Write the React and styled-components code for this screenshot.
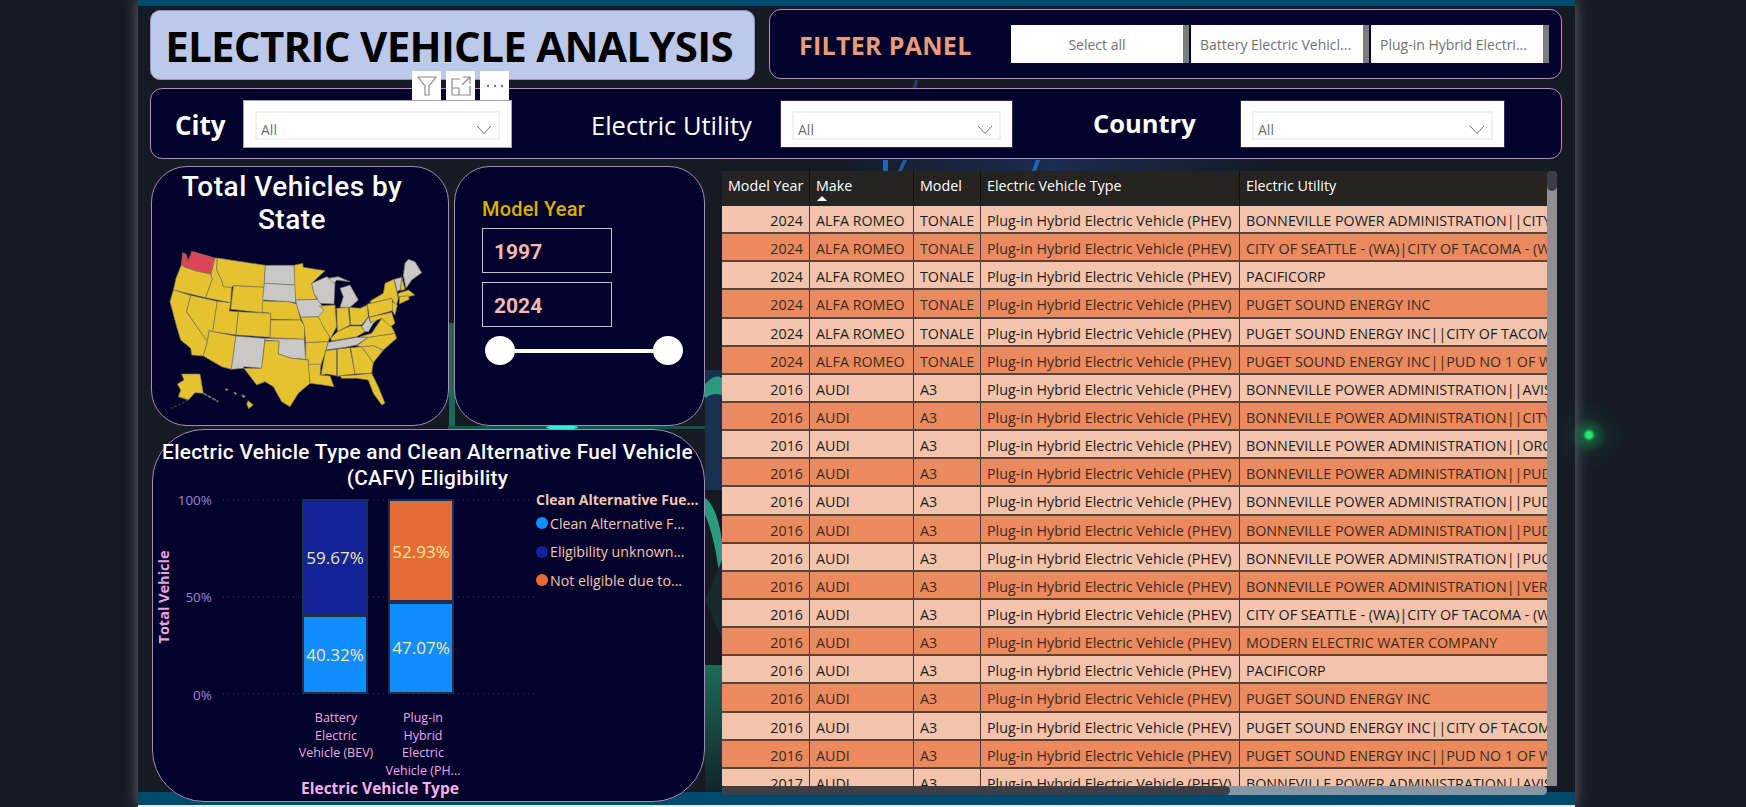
import React from 'react'
import styled, { createGlobalStyle } from 'styled-components'

const Global = createGlobalStyle`
  html, body { margin: 0; padding: 0; background: #161a24; overflow: hidden; }
  * { box-sizing: border-box; }
`

const Page = styled.div`
  position: relative;
  width: 1746px;
  height: 807px;
  padding-left: 138px;
  background: #161a24;
  font-family: "Open Sans", sans-serif;
  overflow: hidden;
`

const Dot = styled.div`
  position: absolute;
  left: 1549px;
  top: 395px;
  width: 80px;
  height: 80px;
  background: radial-gradient(circle, #20e870 0, #20e870 3px, rgba(20, 170, 90, 0.45) 6px, rgba(20, 120, 80, 0.1) 18px, transparent 38px);
`

const Canvas = styled.div`
  position: relative;
  width: 1437px;
  height: 807px;
  display: flex;
  flex-direction: column;
  background: #161a24;
  box-shadow: 0 0 14px rgba(190, 190, 200, 0.5);
`

const Decor = styled.svg`
  position: absolute;
  left: 0;
  top: 0;
`

const TopStrip = styled.div`
  height: 6px;
  flex: none;
  background: #004a6e;
  position: relative;
`

const BottomStrip = styled.div`
  height: 13px;
  flex: none;
  background: #004a6e;
`

const WhiteStrip = styled.div`
  height: 2px;
  flex: none;
  background: #e9ecef;
`

const Body = styled.div`
  position: relative;
  z-index: 1;
  flex: 1;
  min-height: 0;
  padding: 3px 0 0 12px;
  display: flex;
  flex-direction: column;
  & > * { flex: none; }
`

const TopRow = styled.div`
  display: flex;
  align-items: flex-start;
  gap: 14px;
`

const TitleBox = styled.div`
  width: 605px;
  height: 70px;
  margin-top: 1px;
  padding-right: 7px;
  background: #bdc9ea;
  border: 1px solid #a58fb5;
  border-radius: 10px;
  display: flex;
  align-items: center;
  justify-content: center;
`

const Title = styled.h1`
  margin: 0;
  font-family: "Open Sans", sans-serif;
  font-size: 42px;
  font-weight: 700;
  letter-spacing: -0.7px;
  color: #000;
  white-space: nowrap;
`

const Panel = styled.div`
  background: #02022c;
  border: 1px solid #b58fc0;
  border-radius: 12px;
`

const FilterPanel = styled(Panel)`
  width: 793px;
  height: 70px;
  display: flex;
  align-items: center;
  padding-left: 29px;
`

const FilterTitle = styled.div`
  width: 212px;
  font-family: "Open Sans", sans-serif;
  font-size: 25px;
  font-weight: 700;
  color: #ea9c78;
  white-space: nowrap;
  letter-spacing: 0.3px;
  padding-top: 2px;
`

const Chips = styled.div`
  display: flex;
  gap: 2px;
`

const Chip = styled.div`
  width: ${(p) => p.$width}px;
  height: 38px;
  background: #fff;
  border-right: 6px solid #7d7d7d;
  color: #727272;
  font-size: 14px;
  display: flex;
  align-items: center;
  justify-content: ${(p) => (p.$center ? 'center' : 'flex-start')};
  padding-left: ${(p) => (p.$center ? 0 : 9)}px;
  white-space: nowrap;
`

const SlicerRow = styled(Panel)`
  width: 1412px;
  height: 71px;
  margin-top: 8px;
  display: flex;
  align-items: center;
`

const SlicerLabel = styled.div`
  width: ${(p) => p.$width}px;
  padding-left: ${(p) => p.$pad}px;
  color: #fff;
  font-size: ${(p) => p.$size}px;
  font-weight: ${(p) => p.$weight};
  white-space: nowrap;
  flex: none;
  margin-top: ${(p) => p.$top}px;
`

const Slicer = styled.div`
  width: ${(p) => p.$width}px;
  height: 48px;
  flex: none;
  background: #fff;
  border: 1px solid ${(p) => (p.$active ? '#a6a6a6' : '#2e2e52')};
  padding: 10px 11px 7px 11px;
  margin-top: 1px;
`

const SlicerBox = styled.div`
  height: 100%;
  border: 2px solid #f1f1f1;
  display: flex;
  align-items: center;
  justify-content: space-between;
  padding: 8px 6px 0 4px;
  color: #6f6f6f;
  font-size: 14px;
`

const Main = styled.div`
  display: flex;
  margin-top: 7px;
  padding-left: 1px;
`

const LeftColumn = styled.div`
  width: 554px;
  flex: none;
  display: flex;
  flex-direction: column;
  gap: 3px;
`

const CardRow = styled.div`
  display: flex;
  gap: 5px;
`

const Card = styled.div`
  height: 260px;
  background: #02022c;
  border: 1px solid #a98bb0;
  border-radius: 36px;
`

const MapCard = styled(Card)`
  width: 298px;
  padding: 3px 0 0 8px;
`

const MapTitle = styled.div`
  width: 264px;
  margin: 0 0 -6px 0;
  font-family: Roboto, sans-serif;
  font-size: 28px;
  font-weight: 500;
  letter-spacing: 0.5px;
  line-height: 33px;
  text-align: center;
  color: #fff;
`

const YearCard = styled(Card)`
  width: 251px;
  padding: 30px 0 0 29px;
  display: flex;
  flex-direction: column;
`

const YearLabel = styled.div`
  margin-left: -2px;
  font-family: Roboto, sans-serif;
  font-size: 20px;
  font-weight: 500;
  line-height: 24px;
  letter-spacing: 0.2px;
  color: #dcb000;
`

const YearBox = styled.div`
  width: 130px;
  height: 45px;
  margin: ${(p) => p.$top}px 0 0 -2px;
  border: 1px solid #c4c4c4;
  padding: 3px 0 0 11px;
  display: flex;
  align-items: center;
  font-family: Roboto, sans-serif;
  font-size: 21px;
  font-weight: 700;
  color: #f5b8b0;
`

const RangeSlider = styled.div`
  width: 198px;
  margin: 9px 0 0 1px;
  display: flex;
  align-items: center;
`

const Handle = styled.div`
  width: 30px;
  height: 29px;
  flex: none;
  border-radius: 50%;
  background: #fff;
`

const Track = styled.div`
  flex: 1;
  height: 4px;
  background: #fff;
`

const ChartCard = styled(Panel)`
  width: 553px;
  height: 373px;
  margin-left: 1px;
  border-color: #a98bb0;
  border-radius: 52px;
  padding: 9px 2px 0 0;
`

const ChartTitle = styled.div`
  font-family: Roboto, sans-serif;
  font-size: 20.8px;
  font-weight: 500;
  letter-spacing: 0.3px;
  line-height: 26px;
  text-align: center;
  color: #fff;
  white-space: nowrap;
`

const ChartBody = styled.div`
  display: flex;
`

const Legend = styled.div`
  flex: 1;
  color: #f4c8b0;
`

const LegendTitle = styled.div`
  font-size: 14px;
  font-weight: 700;
  line-height: 18px;
  white-space: nowrap;
`

const LegendItem = styled.div`
  height: 28.5px;
  display: flex;
  align-items: center;
  gap: 2px;
  font-size: 14.2px;
  white-space: nowrap;
  &:first-of-type { margin-top: 1px; }
`

const LegendDot = styled.span`
  width: 12px;
  height: 12px;
  border-radius: 50%;
  background: ${(p) => p.$color};
`

const TableWrap = styled.div`
  width: 835px;
  margin: 5px 0 0 17px;
  flex: none;
`

const TableFrame = styled.div`
  display: flex;
  height: 615px;
`

const Table = styled.div`
  width: 825px;
  overflow: hidden;
  font-size: 14.3px;
`

const Columns = styled.div`
  display: grid;
  grid-template-columns: 87px 104px 67px 259px 308px;
`

const HeadRow = styled(Columns)`
  height: 35px;
  background: #252423;
  color: #fff;
`

const HeadCell = styled.div`
  position: relative;
  padding: 5px 6px 0;
  border-left: ${(p) => (p.$first ? 'none' : '1px solid #111')};
  white-space: nowrap;
`

const SortMark = styled.span`
  position: absolute;
  left: 7px;
  top: 25px;
  width: 0;
  height: 0;
  border-left: 5px solid transparent;
  border-right: 5px solid transparent;
  border-bottom: 5px solid #fff;
`

const Row = styled(Columns)`
  height: 28.15px;
  background: ${(p) => (p.$odd ? '#f4c3ac' : '#ea8a5e')};
  color: ${(p) => (p.$odd ? '#1c1c1c' : '#3a2a22')};
  border-bottom: 2px solid #5a4238;
`

const Cell = styled.div`
  padding: 2px 6px 0;
  line-height: 26px;
  white-space: nowrap;
  overflow: hidden;
  border-left: ${(p) => (p.$first ? 'none' : '1px solid #4a3a34')};
  text-align: ${(p) => (p.$right ? 'right' : 'left')};
`

const VBar = styled.div`
  width: 10px;
  background: #8f8f94;
  border-radius: 5px 5px 0 0;
`

const VThumb = styled.div`
  height: 20px;
  background: #3b3e47;
  border-radius: 5px;
`

const HBar = styled.div`
  width: 825px;
  height: 9px;
  background: #8696a4;
  border-radius: 5px;
`

const HThumb = styled.div`
  width: 508px;
  height: 100%;
  background: #3b3f48;
  border-radius: 5px;
`

const VisualTools = styled.div`
  position: absolute;
  z-index: 2;
  left: 274px;
  top: 65px;
  display: flex;
  gap: 5px;
`

const ToolButton = styled.div`
  width: 29px;
  height: 29px;
  background: #fff;
  display: flex;
  align-items: center;
  justify-content: center;
`

const Chevron = () => (
  <svg width="16" height="10" viewBox="0 0 16 10">
    <polyline points="1,1 8,8.5 15,1" fill="none" stroke="#707070" strokeWidth="1" />
  </svg>
)

const YELLOW = '#e5c22f'
const GREY = '#c9c8c6'
const RED = '#dc4654'

// traced by hand over the map visual, in its own 840x570 coordinates
const states = [
  [RED, '68,68 78,72 84,92 93,72 95,64 165,84 153,133 105,122 75,112 64,105'],
  [YELLOW, '64,105 75,112 105,122 153,133 157,148 137,203 40,180 48,145'],
  [YELLOW, '40,180 92,196 80,245 142,335 130,378 95,375 92,355 62,330 50,290 30,215'],
  [YELLOW, '92,196 172,214 158,305 147,302 142,335 80,245'],
  [YELLOW, '165,84 172,84 170,120 185,150 190,170 215,172 212,218 137,203 157,148 153,133'],
  [YELLOW, '172,84 316,106 312,172 220,167 215,172 190,170 185,150 170,120'],
  [YELLOW, '220,167 312,172 308,248 212,238'],
  [YELLOW, '172,214 212,218 208,243 235,245 228,315 158,305'],
  [YELLOW, '235,245 332,250 330,322 228,315'],
  [YELLOW, '158,305 228,318 214,418 185,410 130,378 142,335 147,302'],
  [GREY, '228,318 315,325 305,415 252,410 250,415 214,418'],
  [GREY, '316,106 402,106 407,165 313,160'],
  [GREY, '313,160 407,165 407,218 385,215 308,210'],
  [YELLOW, '308,213 385,215 410,222 422,270 332,268 332,250 306,246'],
  [YELLOW, '332,270 422,270 434,290 433,328 330,323'],
  [GREY, '315,325 433,328 437,388 395,385 355,372 357,333 315,331'],
  [YELLOW, '315,333 357,333 355,372 395,385 445,390 450,460 415,490 390,530 365,515 340,470 315,455 290,465 252,415 305,415'],
  [YELLOW, '402,106 428,100 430,112 495,122 455,160 462,190 470,208 407,210'],
  [GREY, '407,210 475,208 492,240 480,260 422,262 410,225'],
  [YELLOW, '422,262 480,260 490,290 510,320 505,335 437,338 433,290'],
  [YELLOW, '437,338 505,335 495,370 483,405 445,405 445,390 437,388'],
  [YELLOW, '445,403 483,403 480,435 510,438 522,470 490,465 450,460'],
  [GREY, '455,160 500,140 525,155 522,222 480,220 462,190'],
  [YELLOW, '478,228 525,225 530,290 512,325 490,290 475,260 492,240'],
  [GREY, '505,145 535,140 570,155 530,150 522,160'],
  [GREY, '540,175 570,165 595,210 570,232 540,232 550,200'],
  [YELLOW, '530,235 565,232 570,285 532,305'],
  [YELLOW, '568,232 600,235 622,225 625,260 605,285 572,285'],
  [YELLOW, '512,325 532,305 570,288 603,288 615,305 590,320 515,333'],
  [GREY, '505,337 590,322 625,322 590,345 555,352 498,360'],
  [YELLOW, '497,362 530,358 530,437 500,432 483,435'],
  [YELLOW, '532,357 570,353 585,432 540,437 532,440'],
  [YELLOW, '572,353 605,350 640,398 635,430 585,432'],
  [YELLOW, '540,437 585,435 635,430 655,470 675,520 665,525 640,490 625,450 590,445 545,445'],
  [YELLOW, '605,350 640,347 670,360 640,398'],
  [YELLOW, '590,347 625,322 705,310 710,325 670,360 640,347 605,350'],
  [YELLOW, '600,320 635,310 665,265 695,290 705,310 625,322'],
  [GREY, '605,290 625,262 632,278 665,258 640,280 625,305 615,305'],
  [YELLOW, '622,222 695,205 705,240 628,262'],
  [YELLOW, '632,212 670,190 675,160 702,148 715,205 708,230 695,205 630,220'],
  [YELLOW, '628,262 695,247 705,280 692,290 665,265 632,278'],
  [YELLOW, '697,215 712,225 705,255 698,245'],
  [GREY, '703,148 725,142 722,178 712,185'],
  [YELLOW, '725,140 735,178 722,182'],
  [GREY, '735,100 745,88 765,95 785,128 755,150 738,175 730,135'],
  [YELLOW, '715,190 745,180 765,195 745,200 715,200'],
  [YELLOW, '718,200 745,197 748,208 718,222'],
  [YELLOW, '65,432 120,432 130,490 105,488 85,510 55,500 62,480 52,462 72,450'],
  [YELLOW, '222,486 230,490 226,494'],
  [YELLOW, '245,494 256,498 250,503'],
  [YELLOW, '196,476 204,478 200,483'],
  [YELLOW, '264,512 280,525 266,536 260,522'],
]

const USMap = () => (
  <svg width="280" height="190" viewBox="0 0 840 570">
    {states.map(([fill, points], i) => (
      <polygon key={i} points={points} fill={fill} stroke="#7a7560" strokeWidth="2" strokeLinejoin="round" />
    ))}
    <polyline points="130,490 175,515" fill="none" stroke="#6e6a50" strokeWidth="6" strokeDasharray="12 3" />
    <polyline points="85,510 35,535" fill="none" stroke="#6e6a50" strokeWidth="2.5" strokeDasharray="8 5" />
  </svg>
)

const BarChart = () => (
  <svg width="383" height="308" viewBox="153 491 383 308" style={{ display: 'block', overflow: 'visible' }}>
    {[500, 597, 694].map((y) => (
      <line key={y} x1="223" x2="534" y1={y} y2={y} stroke="#3a3a52" strokeWidth="1" strokeDasharray="1 4" />
    ))}
    <g fontFamily="Open Sans, sans-serif" fontSize="13.5" fill="#9c86d8" textAnchor="end">
      <text x="212" y="505">100%</text>
      <text x="212" y="602">50%</text>
      <text x="212" y="700">0%</text>
    </g>
    <text transform="translate(169 597) rotate(-90)" fontFamily="Open Sans, sans-serif" fontSize="14.5" fontWeight="700" fill="#e9a4e0" textAnchor="middle">Total Vehicle</text>

    <g stroke="#1c2c52" strokeWidth="2">
      <rect x="303" y="500" width="64" height="114" fill="#13249a" />
      <rect x="303" y="616" width="64" height="77" fill="#118dff" />
      <rect x="389" y="500" width="64" height="101" fill="#e66c37" />
      <rect x="389" y="603" width="64" height="90" fill="#118dff" />
    </g>
    <g fontFamily="Open Sans, sans-serif" fontSize="17" fill="#f2e69a" textAnchor="middle">
      <text x="335" y="564">59.67%</text>
      <text x="335" y="661">40.32%</text>
      <text x="421" y="558">52.93%</text>
      <text x="421" y="654">47.07%</text>
    </g>
    <g fontFamily="Open Sans, sans-serif" fontSize="12.5" fill="#eeaae4" textAnchor="middle">
      <text x="336" y="722">Battery</text>
      <text x="336" y="740">Electric</text>
      <text x="336" y="757">Vehicle (BEV)</text>
      <text x="423" y="722">Plug-in</text>
      <text x="423" y="740">Hybrid</text>
      <text x="423" y="757">Electric</text>
      <text x="423" y="775">Vehicle (PH...</text>
    </g>
    <text x="380" y="794" fontFamily="Open Sans, sans-serif" fontSize="15.5" fontWeight="700" fill="#f3b2ea" textAnchor="middle">Electric Vehicle Type</text>
  </svg>
)

const BON = 'BONNEVILLE POWER ADMINISTRATION||'
const SEA = 'CITY OF SEATTLE - (WA)|CITY OF TACOMA - (WA)'
const PSE = 'PUGET SOUND ENERGY INC'

const utilities = [
  [2024, 'ALFA ROMEO', 'TONALE', BON + 'CITY OF TACOMA - (WA)'],
  [2024, 'ALFA ROMEO', 'TONALE', SEA],
  [2024, 'ALFA ROMEO', 'TONALE', 'PACIFICORP'],
  [2024, 'ALFA ROMEO', 'TONALE', PSE],
  [2024, 'ALFA ROMEO', 'TONALE', PSE + '||CITY OF TACOMA - (WA)'],
  [2024, 'ALFA ROMEO', 'TONALE', PSE + '||PUD NO 1 OF WHATCOM COUNTY'],
  [2016, 'AUDI', 'A3', BON + 'AVISTA CORP'],
  [2016, 'AUDI', 'A3', BON + 'CITY OF TACOMA - (WA)'],
  [2016, 'AUDI', 'A3', BON + 'ORCAS POWER & LIGHT COOP'],
  [2016, 'AUDI', 'A3', BON + 'PUD NO 1 OF ASOTIN COUNTY'],
  [2016, 'AUDI', 'A3', BON + 'PUD NO 1 OF BENTON COUNTY'],
  [2016, 'AUDI', 'A3', BON + 'PUD NO 1 OF CLARK COUNTY'],
  [2016, 'AUDI', 'A3', BON + 'PUGET SOUND ENERGY INC'],
  [2016, 'AUDI', 'A3', BON + 'VERA WATER & POWER'],
  [2016, 'AUDI', 'A3', SEA],
  [2016, 'AUDI', 'A3', 'MODERN ELECTRIC WATER COMPANY'],
  [2016, 'AUDI', 'A3', 'PACIFICORP'],
  [2016, 'AUDI', 'A3', PSE],
  [2016, 'AUDI', 'A3', PSE + '||CITY OF TACOMA - (WA)'],
  [2016, 'AUDI', 'A3', PSE + '||PUD NO 1 OF WHATCOM COUNTY'],
  [2017, 'AUDI', 'A3', BON + 'AVISTA CORP'],
]

const App = () => (
  <Page>
    <Global />
    <Canvas>
      <Decor width="1437" height="807" viewBox="138 0 1437 807">
        <defs>
          <linearGradient id="floor" x1="0" y1="0" x2="0" y2="1">
            <stop offset="0" stopColor="#1f6a58" />
            <stop offset="1" stopColor="#10242c" />
          </linearGradient>
          <linearGradient id="sky" x1="0" y1="0" x2="1" y2="0">
            <stop offset="0" stopColor="#161a24" />
            <stop offset="0.5" stopColor="#1a2c50" />
            <stop offset="1" stopColor="#161a24" />
          </linearGradient>
        </defs>
        <rect x="820" y="158" width="460" height="14" fill="url(#sky)" />
        <polygon points="883,160 888,160 888,171 883,171" fill="#1f66c0" />
        <polygon points="903,160 907,160 902,171 898,171" fill="#2a5a98" />
        <polygon points="1036,160 1040,160 1036,171 1032,171" fill="#1f66c0" />
        <polygon points="915,80 918,80 916,88 913,88" fill="#20406c" />
        <rect x="449" y="323" width="6" height="106" fill="#1a6a58" />
        <rect x="448" y="426" width="274" height="3" fill="#17504a" />
        <ellipse cx="562" cy="427.5" rx="16" ry="2" fill="#2ff0e0" />
        <rect x="705" y="370" width="17" height="120" fill="#1a3050" />
        <path d="M700 392 Q712 372 722 378 L722 395 Q712 392 706 398 Z" fill="#2a9a80" />
        <path d="M700 495 Q716 500 722 540 L722 600 Q716 530 700 505 Z" fill="#2a9a80" />
        <path d="M705 600 L722 560 L722 640 Z" fill="#182a30" />
        <rect x="705" y="665" width="17" height="127" fill="url(#floor)" />
      </Decor>
      <TopStrip />
      <Body>
        <TopRow>
          <TitleBox>
            <Title>ELECTRIC VEHICLE ANALYSIS</Title>
          </TitleBox>
          <FilterPanel>
            <FilterTitle>FILTER PANEL</FilterTitle>
            <Chips>
              <Chip $width={178} $center>Select all</Chip>
              <Chip $width={178}>Battery Electric Vehicl...</Chip>
              <Chip $width={178}>Plug-in Hybrid Electri...</Chip>
            </Chips>
          </FilterPanel>
        </TopRow>

        <SlicerRow>
          <SlicerLabel $width={92} $pad={24} $size={26} $weight={700} $top={2}>City</SlicerLabel>
          <Slicer $width={269} $active>
            <SlicerBox>All<Chevron /></SlicerBox>
          </Slicer>
          <SlicerLabel $width={268} $pad={79} $size={25.5} $weight={400} $top={2}>Electric Utility</SlicerLabel>
          <Slicer $width={233}>
            <SlicerBox>All<Chevron /></SlicerBox>
          </Slicer>
          <SlicerLabel $width={227} $pad={80} $size={25.5} $weight={700} $top={-2}>Country</SlicerLabel>
          <Slicer $width={265}>
            <SlicerBox>All<Chevron /></SlicerBox>
          </Slicer>
        </SlicerRow>

        <Main>
          <LeftColumn>
            <CardRow>
              <MapCard>
                <MapTitle>Total Vehicles by State</MapTitle>
                <USMap />
              </MapCard>
              <YearCard>
                <YearLabel>Model Year</YearLabel>
                <YearBox $top={7}>1997</YearBox>
                <YearBox $top={9}>2024</YearBox>
                <RangeSlider>
                  <Handle />
                  <Track />
                  <Handle />
                </RangeSlider>
              </YearCard>
            </CardRow>
            <ChartCard>
              <ChartTitle>
                Electric Vehicle Type and Clean Alternative Fuel Vehicle
                <br />
                (CAFV) Eligibility
              </ChartTitle>
              <ChartBody>
                <BarChart />
                <Legend>
                  <LegendTitle>Clean Alternative Fue...</LegendTitle>
                  <LegendItem><LegendDot $color="#118dff" />Clean Alternative F...</LegendItem>
                  <LegendItem><LegendDot $color="#13249a" />Eligibility unknown...</LegendItem>
                  <LegendItem><LegendDot $color="#e66c37" />Not eligible due to...</LegendItem>
                </Legend>
              </ChartBody>
            </ChartCard>
          </LeftColumn>

          <TableWrap>
            <TableFrame>
              <Table>
                <HeadRow>
                  <HeadCell $first>Model Year</HeadCell>
                  <HeadCell>Make<SortMark /></HeadCell>
                  <HeadCell>Model</HeadCell>
                  <HeadCell>Electric Vehicle Type</HeadCell>
                  <HeadCell>Electric Utility</HeadCell>
                </HeadRow>
                {utilities.map(([year, make, model, utility], i) => (
                  <Row key={i} $odd={i % 2 === 0}>
                    <Cell $first $right>{year}</Cell>
                    <Cell>{make}</Cell>
                    <Cell>{model}</Cell>
                    <Cell>Plug-in Hybrid Electric Vehicle (PHEV)</Cell>
                    <Cell>{utility}</Cell>
                  </Row>
                ))}
              </Table>
              <VBar><VThumb /></VBar>
            </TableFrame>
            <HBar><HThumb /></HBar>
          </TableWrap>
        </Main>

        <VisualTools>
          <ToolButton>
            <svg width="22" height="24" viewBox="0 0 22 24">
              <path d="M2 3 H20 L13 12 V21 H9 V12 Z" fill="none" stroke="#8a8a8a" strokeWidth="1.2" />
            </svg>
          </ToolButton>
          <ToolButton>
            <svg width="22" height="22" viewBox="0 0 22 22">
              <path d="M2 20 H20 V11 M2 20 V4 H10 M2 13 H9 V20 M13 2 H20 V9 M20 2 L12 10" fill="none" stroke="#8a8a8a" strokeWidth="1.2" />
            </svg>
          </ToolButton>
          <ToolButton>
            <svg width="20" height="6" viewBox="0 0 20 6">
              <circle cx="3" cy="3" r="1.2" fill="#777" />
              <circle cx="10" cy="3" r="1.2" fill="#777" />
              <circle cx="17" cy="3" r="1.2" fill="#777" />
            </svg>
          </ToolButton>
        </VisualTools>
      </Body>
      <BottomStrip />
      <WhiteStrip />
    </Canvas>
    <Dot />
  </Page>
)

export default App
